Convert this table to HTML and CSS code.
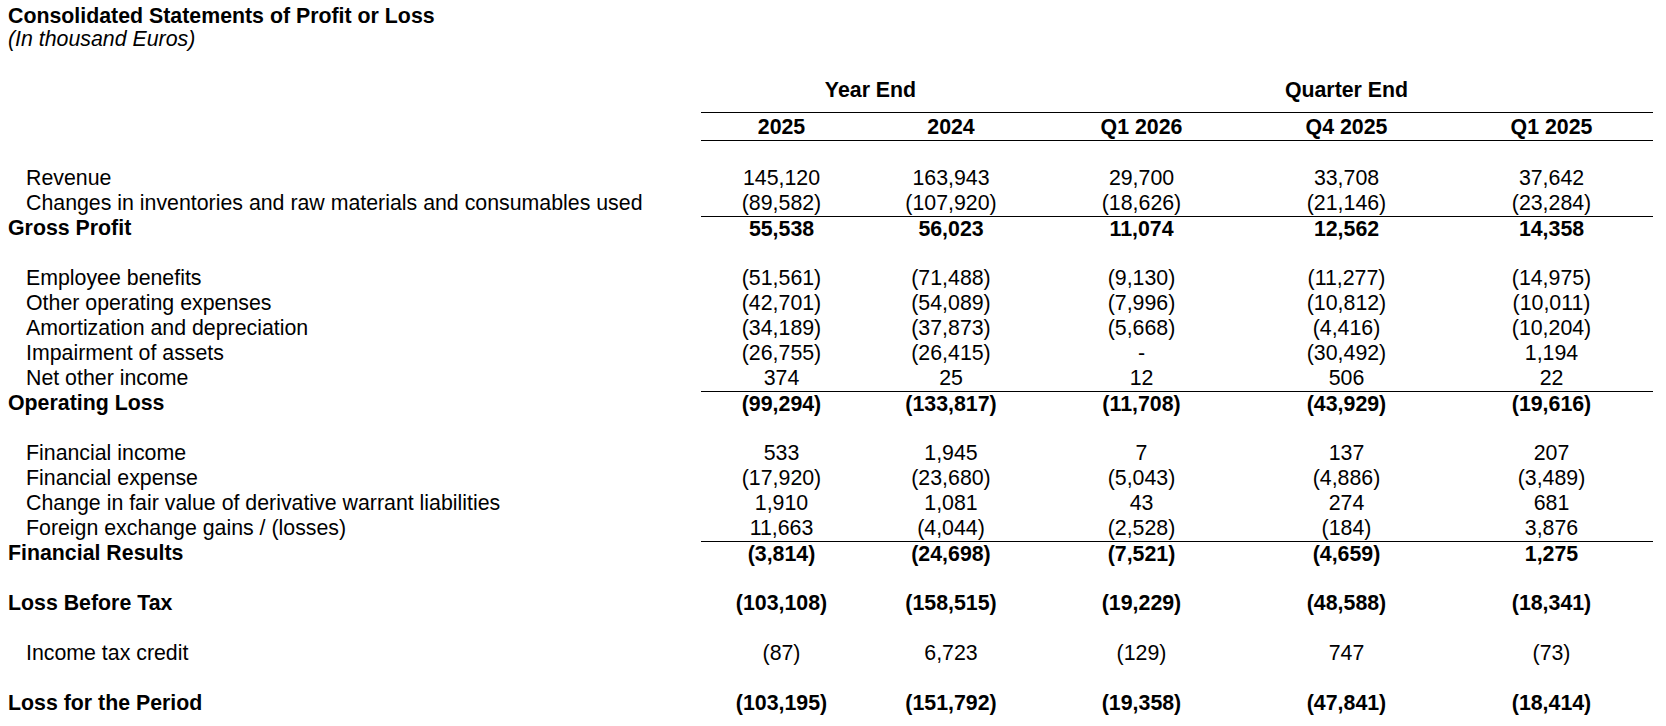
FILE: index.html
```html
<!DOCTYPE html>
<html lang="en">
<head>
  <meta charset="UTF-8">
  <title>Consolidated Statements of Profit or Loss</title>
  <link rel="stylesheet" href="styles.css">
</head>
<body>
  <!-- Cabeçalho -->
  <div class="title">Consolidated Statements of Profit or Loss</div>
  <div class="subtitle">(In thousand Euros)</div>

  <table class="statement">
    <colgroup>
      <col class="col-label">
      <col class="col-a">
      <col class="col-b">
      <col class="col-c">
      <col class="col-d">
      <col class="col-e">
    </colgroup>
    <thead>
      <tr class="group-row">
        <th></th>
        <th colspan="2" class="group">Year End</th>
        <th colspan="3" class="group">Quarter End</th>
      </tr>
      <tr class="period-row">
        <th></th>
        <th class="period">2025</th>
        <th class="period">2024</th>
        <th class="period">Q1 2026</th>
        <th class="period">Q4 2025</th>
        <th class="period">Q1 2025</th>
      </tr>
    </thead>
    <tbody>
      <tr class="blank"><td colspan="6"></td></tr>
      <tr><td class="label">Revenue</td><td>145,120</td><td>163,943</td><td>29,700</td><td>33,708</td><td>37,642</td></tr>
      <tr><td class="label">Changes in inventories and raw materials and consumables used</td><td>(89,582)</td><td>(107,920)</td><td>(18,626)</td><td>(21,146)</td><td>(23,284)</td></tr>
      <tr class="total ruled"><td class="label">Gross Profit</td><td>55,538</td><td>56,023</td><td>11,074</td><td>12,562</td><td>14,358</td></tr>

      <tr class="blank"><td colspan="6"></td></tr>
      <tr><td class="label">Employee benefits</td><td>(51,561)</td><td>(71,488)</td><td>(9,130)</td><td>(11,277)</td><td>(14,975)</td></tr>
      <tr><td class="label">Other operating expenses</td><td>(42,701)</td><td>(54,089)</td><td>(7,996)</td><td>(10,812)</td><td>(10,011)</td></tr>
      <tr><td class="label">Amortization and depreciation</td><td>(34,189)</td><td>(37,873)</td><td>(5,668)</td><td>(4,416)</td><td>(10,204)</td></tr>
      <tr><td class="label">Impairment of assets</td><td>(26,755)</td><td>(26,415)</td><td>-</td><td>(30,492)</td><td>1,194</td></tr>
      <tr><td class="label">Net other income</td><td>374</td><td>25</td><td>12</td><td>506</td><td>22</td></tr>
      <tr class="total ruled"><td class="label">Operating Loss</td><td>(99,294)</td><td>(133,817)</td><td>(11,708)</td><td>(43,929)</td><td>(19,616)</td></tr>

      <tr class="blank"><td colspan="6"></td></tr>
      <tr><td class="label">Financial income</td><td>533</td><td>1,945</td><td>7</td><td>137</td><td>207</td></tr>
      <tr><td class="label">Financial expense</td><td>(17,920)</td><td>(23,680)</td><td>(5,043)</td><td>(4,886)</td><td>(3,489)</td></tr>
      <tr><td class="label">Change in fair value of derivative warrant liabilities</td><td>1,910</td><td>1,081</td><td>43</td><td>274</td><td>681</td></tr>
      <tr><td class="label">Foreign exchange gains / (losses)</td><td>11,663</td><td>(4,044)</td><td>(2,528)</td><td>(184)</td><td>3,876</td></tr>
      <tr class="total ruled"><td class="label">Financial Results</td><td>(3,814)</td><td>(24,698)</td><td>(7,521)</td><td>(4,659)</td><td>1,275</td></tr>

      <tr class="blank"><td colspan="6"></td></tr>
      <tr class="total"><td class="label">Loss Before Tax</td><td>(103,108)</td><td>(158,515)</td><td>(19,229)</td><td>(48,588)</td><td>(18,341)</td></tr>

      <tr class="blank"><td colspan="6"></td></tr>
      <tr><td class="label">Income tax credit</td><td>(87)</td><td>6,723</td><td>(129)</td><td>747</td><td>(73)</td></tr>

      <tr class="blank"><td colspan="6"></td></tr>
      <tr class="total"><td class="label">Loss for the Period</td><td>(103,195)</td><td>(151,792)</td><td>(19,358)</td><td>(47,841)</td><td>(18,414)</td></tr>
    </tbody>
  </table>
</body>
</html>
```

FILE: styles.css
```css
body {
  margin: 0;
  padding: 5px 8px 0;
  font-family: "Liberation Sans", Arial, sans-serif;
  font-size: 21.33px;
  color: #000;
  background-color: #fff;
}
.title {
  font-weight: bold;
  line-height: 23px;
}
.subtitle {
  font-style: italic;
  line-height: 23px;
}
.statement {
  margin-top: 27px;
  width: 1645px;
  table-layout: fixed;
  border-collapse: separate;
  border-spacing: 0;
}
.col-label { width: 693px; }
.col-a { width: 161px; }
.col-b { width: 178px; }
.col-c { width: 203px; }
.col-d { width: 207px; }
.col-e { width: 203px; }
.statement th,
.statement td {
  padding: 0;
  line-height: 25px;
  white-space: nowrap;
  text-align: center;
  font-weight: normal;
}
.statement th.group {
  font-weight: bold;
  padding-bottom: 9px;
  border-bottom: 1px solid #000;
}
.statement th.period {
  font-weight: bold;
  padding-top: 2px;
  border-bottom: 1px solid #000;
}
.statement td.label {
  text-align: left;
  padding-left: 18px;
}
.statement tr.total td {
  font-weight: bold;
}
.statement tr.total td.label {
  padding-left: 0;
}
.statement tr.ruled td {
  line-height: 24px;
  border-top: 1px solid #000;
}
.statement tr.ruled td.label {
  line-height: 25px;
  border-top: none;
}
.statement tr.blank td {
  height: 25px;
}
```
